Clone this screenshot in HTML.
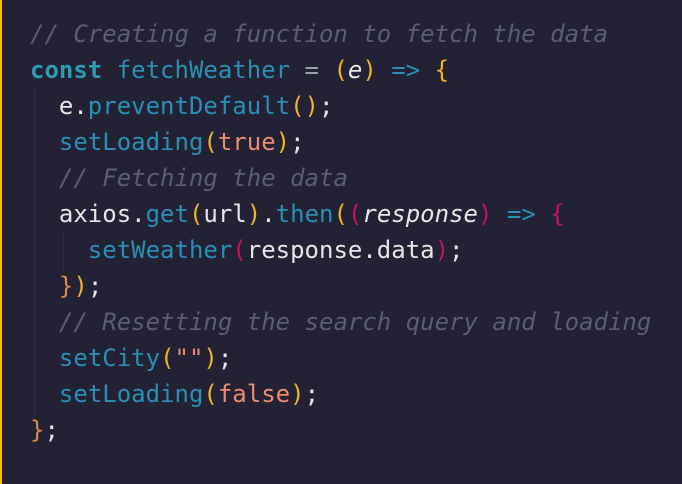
<!DOCTYPE html>
<html><head><style>
html,body{margin:0;padding:0;}
body{width:682px;height:484px;background:#222234;position:relative;overflow:hidden;border-left:2px solid #f4c20d;box-sizing:border-box;}
pre{margin:0;position:absolute;left:28px;top:16px;font-family:"DejaVu Sans Mono","Liberation Mono",monospace;font-size:24px;line-height:36px;color:#e6e6e6;}
.c{color:#5c5d6e;font-style:italic}
.k{color:#2e9cb0;font-weight:bold}
.f{color:#2a8fb3}
.o{color:#9aa0a8}
.y{color:#f0b429}
.m{color:#c5135f}
.b{color:#ec8a72}
.i{font-style:italic;color:#e6e6e6}
.br{color:#d88a4a}
.g{position:absolute;border-left:1px dotted #3a3c52;}
</style></head><body>
<div class="g" style="left:32px;top:90px;height:334px"></div>
<div class="g" style="left:61px;top:234px;height:36px"></div>
<pre><span class="c">// Creating a function to fetch the data</span>
<span class="k">const</span> <span class="f">fetchWeather</span> <span class="o">=</span> <span class="y">(</span><span class="i">e</span><span class="y">)</span> <span class="f">=&gt;</span> <span class="y">{</span>
  e.<span class="f">preventDefault</span><span class="y">()</span>;
  <span class="f">setLoading</span><span class="y">(</span><span class="b">true</span><span class="y">)</span>;
  <span class="c">// Fetching the data</span>
  axios.<span class="f">get</span><span class="y">(</span>url<span class="y">)</span>.<span class="f">then</span><span class="y">(</span><span class="m">(</span><span class="i">response</span><span class="m">)</span> <span class="f">=&gt;</span> <span class="m">{</span>
    <span class="f">setWeather</span><span class="m">(</span>response.data<span class="m">)</span>;
  <span class="br">}</span><span class="y">)</span>;
  <span class="c">// Resetting the search query and loading</span>
  <span class="f">setCity</span><span class="y">(</span><span class="b">""</span><span class="y">)</span>;
  <span class="f">setLoading</span><span class="y">(</span><span class="b">false</span><span class="y">)</span>;
<span class="br">}</span>;</pre>
</body></html>
